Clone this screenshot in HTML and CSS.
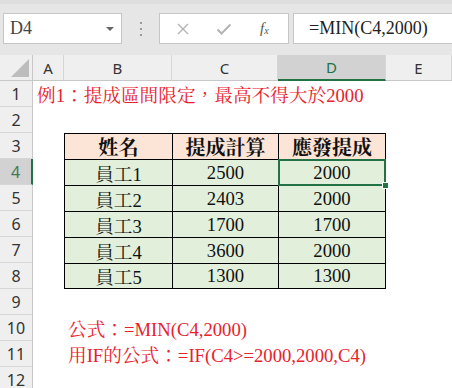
FILE: index.html
```html
<!DOCTYPE html>
<html lang="zh-Hant">

<head>
    <meta charset="UTF-8">
    <meta name="viewport" content="width=device-width, initial-scale=1.0">
    <title>提成區間限定</title>
    <link rel="stylesheet" href="styles.css">
</head>

<body>
    <div class="toolbar">
        <div class="namebox">
            <span class="ref">D4</span>
            <span class="caret"></span>
        </div>
        <div class="grip">
            <svg width="4" height="14" viewBox="0 0 4 14">
                <rect x="1" y="0" width="2" height="2" fill="#9a9a9a" />
                <rect x="1" y="6" width="2" height="2" fill="#9a9a9a" />
                <rect x="1" y="12" width="2" height="2" fill="#9a9a9a" />
            </svg>
        </div>
        <div class="fbuttons">
            <svg class="btn" width="14" height="14" viewBox="0 0 14 14">
                <path d="M2 2 L12 12 M12 2 L2 12" stroke="#b4b4b4" stroke-width="1.4" fill="none" />
            </svg>
            <svg class="btn" width="16" height="14" viewBox="0 0 16 14">
                <path d="M1.5 7.5 L5.5 11.5 L14.5 2.5" stroke="#b4b4b4" stroke-width="2" fill="none" />
            </svg>
            <span class="fx">f<sub>x</sub></span>
        </div>
        <div class="fbar">=MIN(C4,2000)</div>
    </div>

    <div class="sheet">
        <div class="corner"><span class="tri"></span></div>
        <div class="colhead">A</div>
        <div class="colhead">B</div>
        <div class="colhead">C</div>
        <div class="colhead active">D</div>
        <div class="colhead">E</div>

        <div class="rowhead">1</div>
        <div class="note title">例1：提成區間限定，最高不得大於2000</div>

        <div class="rowhead">2</div>

        <div class="rowhead">3</div>
        <div class="t th cb">姓名</div>
        <div class="t th cc">提成計算</div>
        <div class="t th cd">應發提成</div>

        <div class="rowhead active">4</div>
        <div class="t cb">員工1</div>
        <div class="t cc num">2500</div>
        <div class="t cd num picked">2000<span class="sel"><span class="handle"></span></span></div>

        <div class="rowhead">5</div>
        <div class="t cb">員工2</div>
        <div class="t cc num">2403</div>
        <div class="t cd num">2000</div>

        <div class="rowhead">6</div>
        <div class="t cb">員工3</div>
        <div class="t cc num">1700</div>
        <div class="t cd num">1700</div>

        <div class="rowhead">7</div>
        <div class="t cb">員工4</div>
        <div class="t cc num">3600</div>
        <div class="t cd num">2000</div>

        <div class="rowhead">8</div>
        <div class="t cb last">員工5</div>
        <div class="t cc num last">1300</div>
        <div class="t cd num last">1300</div>

        <div class="rowhead">9</div>

        <div class="rowhead">10</div>
        <div class="note formula">公式：=MIN(C4,2000)</div>

        <div class="rowhead">11</div>
        <div class="note formula">用IF的公式：=IF(C4&gt;=2000,2000,C4)</div>

        <div class="rowhead">12</div>
    </div>
</body>

</html>
```

FILE: styles.css
```css
body {
    margin: 0;
    width: 452px;
    height: 388px;
    overflow: hidden;
    background-color: #fff;
    font-family: "Liberation Serif", "Noto Serif CJK TC", "Noto Sans CJK TC", serif;
}

.toolbar {
    height: 55px;
    box-sizing: border-box;
    padding: 13px 0 11px 3px;
    display: flex;
    align-items: stretch;
    background-color: #e6e6e6;
    border-top: 4px solid #dedede;
    padding-top: 9px;
}

.namebox {
    width: 119px;
    box-sizing: border-box;
    display: flex;
    align-items: center;
    justify-content: space-between;
    padding: 0 7px 0 6px;
    background-color: #fff;
    border: 1px solid #c6c6c6;
}

.ref {
    font-size: 18px;
    color: #444;
}

.caret {
    width: 0;
    height: 0;
    border-left: 4px solid transparent;
    border-right: 4px solid transparent;
    border-top: 4px solid #666;
}

.grip {
    width: 37px;
    display: flex;
    align-items: center;
    justify-content: center;
}

.fbuttons {
    width: 130px;
    box-sizing: border-box;
    display: flex;
    align-items: center;
    gap: 26px;
    padding-left: 16px;
    background-color: #fff;
    border: 1px solid #c6c6c6;
}

.fbuttons .btn {
    flex: none;
}

.fx {
    font-style: italic;
    font-size: 15px;
    color: #555;
    margin-left: 2px;
}

.fx sub {
    font-size: 10px;
    vertical-align: -1px;
}

.fbar {
    flex: 1;
    margin-left: 4px;
    padding-left: 15px;
    display: flex;
    align-items: center;
    font-size: 18px;
    color: #222;
    background-color: #fff;
    border: 1px solid #c6c6c6;
    border-right: none;
}

.sheet {
    display: grid;
    grid-template-columns: 33px 31px 108px 106px 108px 1fr;
    grid-auto-rows: 26px;
}

.corner,
.colhead,
.rowhead {
    box-sizing: border-box;
    background-color: #efefef;
    font-family: "Noto Sans", "Open Sans", sans-serif;
    font-size: 15px;
    color: #333;
    display: flex;
    align-items: center;
    justify-content: center;
}

.corner {
    position: relative;
    border-right: 1px solid #c8c8c8;
    border-bottom: 1px solid #c8c8c8;
}

.corner .tri {
    position: absolute;
    right: 3px;
    bottom: 3px;
    width: 0;
    height: 0;
    border-left: 18px solid transparent;
    border-bottom: 18px solid #bdbdbd;
}

.colhead {
    border-right: 1px solid #d6d6d6;
    border-bottom: 1px solid #c8c8c8;
}

.colhead.active {
    background-color: #d2d2d2;
    color: #217346;
    border-bottom: 2px solid #217346;
}

.rowhead {
    grid-column: 1;
    border-right: 1px solid #c8c8c8;
    border-bottom: 1px solid #d6d6d6;
    font-size: 16px;
}

.rowhead.active {
    background-color: #d2d2d2;
    color: #3b7a55;
    border-right: 2px solid #217346;
}

.note {
    white-space: nowrap;
    display: flex;
    align-items: center;
    font-size: 18.67px;
    color: #e8222c;
}

.title {
    grid-column: 2 / -1;
    padding-left: 4px;
}

.formula {
    grid-column: 3 / -1;
    padding-left: 4px;
}

.t {
    box-sizing: border-box;
    display: flex;
    align-items: center;
    justify-content: center;
    background-color: #e2efda;
    border-left: 1px solid #000;
    border-top: 1px solid #000;
    font-size: 18.67px;
    color: #111;
}

.cb {
    grid-column: 3;
}

.cc {
    grid-column: 4;
}

.cd {
    grid-column: 5;
    border-right: 1px solid #000;
}

.th {
    background-color: #fce4d6;
    font-weight: bold;
    font-size: 20px;
}

.last {
    border-bottom: 1px solid #000;
}

.picked {
    position: relative;
}

.sel {
    position: absolute;
    left: -1px;
    top: -1px;
    right: -1px;
    bottom: -1px;
    border: 2px solid #217346;
}

.handle {
    position: absolute;
    right: -5px;
    bottom: -5px;
    width: 5px;
    height: 5px;
    background-color: #217346;
    border: 1px solid #fff;
}
```
